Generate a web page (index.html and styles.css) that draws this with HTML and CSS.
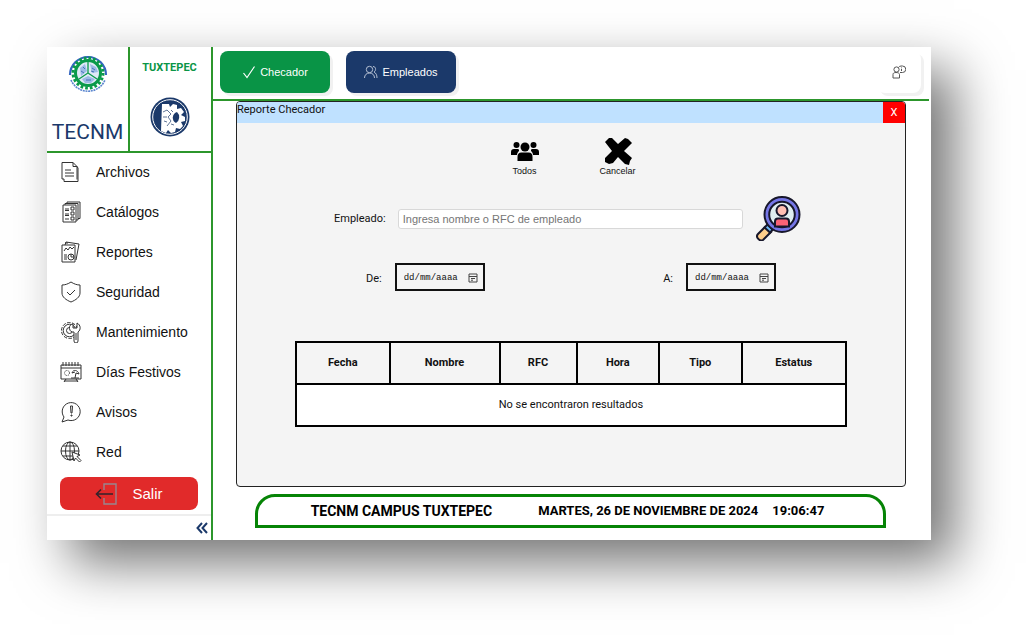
FILE: index.html
```html
<!DOCTYPE html>
<html lang="es">
<head>
<meta charset="utf-8">
<title>Reporte Checador</title>
<link rel="stylesheet" href="styles.css">
</head>
<body>
<div class="app">
  <aside class="sidebar">
    <header class="brand">
      <div class="brand-main">
        <svg class="seal" viewBox="0 0 40 40" fill="none">
          <path d="M2 22A18 18 0 1 1 38 22" stroke="#3465c0" stroke-width="2.2"/>
          <path d="M3 27A18.500 18.500 0 0 0 37 27" stroke="#5b86cf" stroke-width="1.600" stroke-dasharray="2 .7"/>
          <circle cx="20" cy="20" r="15" stroke="#0a9a4a" stroke-width="3" stroke-dasharray="2.700 2.012"/>
          <circle cx="20" cy="20" r="12.500" fill="#dfe9f7" stroke="#0a9a4a" stroke-width="3"/>
          <path d="M12 15l5-4 2 7-6 5zM22 11l6 3 2 5-6 1zM14 26l6-3 7 3-4 4h-6z" fill="#9dbbe6"/>
          <path d="M20 8v12L11 26M20 20l9 6" stroke="#0a9a4a" stroke-width="1.300"/>
          <path d="M13 18l3 2M24 15l3 2M18 27h5M15 14l2 2M23 18l3 1" stroke="#4673b8"/>
        </svg>
        <span class="brand-name">TECNM</span>
      </div>
      <div class="brand-campus">
        <span class="campus-name">TUXTEPEC</span>
        <svg class="campus-logo" viewBox="0 0 40 40">
          <circle cx="20" cy="20" r="19.500" fill="#1b396a"/>
          <circle cx="20" cy="20" r="17.300" fill="none" stroke="#fff" stroke-width="1"/>
          <path d="M12 7h7l1 3 3-3 4 1v4l4-1 3 4-3 3 4 2v4l-4 1 2 4-3 3-4-1-1 4-4 1-3-3-2 3-5-2z" fill="#fff"/>
          <path d="M27 15a6 6 0 0 0-1 11 7 7 0 0 0 1-11z" fill="#1b396a"/>
          <path d="M13 15l4-2 4 4-3 3 3 4-4 5M13 20h4M14 24l3 1M21 13l2 2M21 27l3 1" fill="none" stroke="#1b396a" stroke-width=".7"/>
        </svg>
      </div>
    </header>
    <nav class="menu">
      <a href="#archivos"><svg viewBox="0 0 22 22"><path d="M4 18H2V1.500h11L17 5.500v13"/><path d="M13 1.500v4h4M4 18v2.500h14V7l-1-1.500M5 9h6M5 12h9M5 15h9"/></svg>Archivos</a>
      <a href="#catalogos"><svg viewBox="0 0 22 22"><path d="M3 4h13v17H3zM5 4V2.500h13V19h-2M7 2.500V1h13v16.500h-2"/><path d="M5 8h4M5 13h4M5 18h4M5 9.500h4M5 14.500h4M11 6h3v3h-3zM11 11h3v3h-3zM11 16h3v3h-3z"/></svg>Catálogos</a>
      <a href="#reportes"><svg viewBox="0 0 22 22"><path d="M2 4h13v17H2zM5 4l1-3 13 2-3 16M5 2h3"/><path d="M4 10l2-3 2 2 2-3 2 2 2-2M4 14h3M4 16h3M4 18h3"/><circle cx="11" cy="16" r="3"/><path d="M11 13v3h3"/></svg>Reportes</a>
      <a href="#seguridad"><svg viewBox="0 0 22 22"><path d="M11 1c3 2 6 3 9 3v8c0 4-4 7-9 9-5-2-9-5-9-9V4c3 0 6-1 9-3z"/><path d="M7 11l3 3 5-5"/></svg>Seguridad</a>
      <a href="#mantenimiento"><svg viewBox="0 0 22 22"><circle cx="9.500" cy="9.500" r="8" stroke-dasharray="3.500 1.500"/><circle cx="9.500" cy="9.500" r="6.300"/><circle cx="9.500" cy="9.500" r="3"/><path fill="#fff" d="M14 11a4 4 0 0 1-1-8v4h4V2c4 2 4 7 1 9v9a2 2 0 0 1-4 0z"/><path d="M16 12v7"/></svg>Mantenimiento</a>
      <a href="#festivos"><svg viewBox="0 0 22 22"><path d="M1 4h20v14H1zM1 7h20M3 1v4M6 1v4M9 1v4M12 1v4M15 1v4M18 1v4M4 21l2-3M18 21l-2-3M4 20h14"/><circle cx="7" cy="12" r="2.500" stroke-dasharray="1 .8"/><path d="M12 12c1-4 6-3 7 1l-3-1-1 5M12 12l3-1M11 17h8"/></svg>Días Festivos</a>
      <a href="#avisos"><svg viewBox="0 0 22 22"><path d="M4 16a9 9 0 1 1 4 3l-6 2z"/><path d="M10.500 5h2l-.5 7h-1zM11 14h1v1h-1z"/></svg>Avisos</a>
      <a href="#red"><svg viewBox="0 0 22 22"><circle cx="10" cy="10" r="9"/><ellipse cx="10" cy="10" rx="4.500" ry="9"/><path d="M10 1v18M1 10h18M3 5h14M3 15h14"/><path fill="#fff" d="M12 11l8 3-3 1.500 4 4-1.500 1.500-4-4-1.500 3z"/></svg>Red</a>
    </nav>
    <button class="logout" type="button">
      <svg viewBox="0 0 24 22"><path class="door" d="M9 7V1h12v20H9v-6"/><path class="arrow" d="M18 11H1.500M6 6.500 1.500 11 6 15.500"/></svg>Salir
    </button>
    <div class="collapse">
      <button type="button" aria-label="Contraer menú"><svg viewBox="0 0 12 12"><path d="M6 1 1.500 6 6 11M11 1 6.500 6l4.500 5"/></svg></button>
    </div>
  </aside>

  <main class="main">
    <div class="topbar">
      <button class="tab tab-green" type="button"><svg viewBox="0 0 14 14"><path d="M1.500 8l3.500 4.500L12.500 1.500" stroke-width="1.200"/></svg>Checador</button>
      <button class="tab tab-blue" type="button"><svg viewBox="0 0 14 14"><circle cx="5.500" cy="4.500" r="3.200"/><path d="M.5 13c0-3 2-5 5-5s5 2 5 5M9 1.500c3 0 3.500 4 1 5.500 2 1 3 3 3 6"/></svg>Empleados</button>
      <button class="profile" type="button" aria-label="Información de usuario"><svg viewBox="0 0 14 14"><circle cx="4.500" cy="4.500" r="2.600"/><path d="M1 13v-3.500c0-1.300 1-2 3-2s3.500.7 3.500 2V13z"/><path d="M6.500 2.500A3 3 0 0 1 9 1h1.500a3 3 0 0 1 0 6.500H8M9.500 2.500v.8M9.500 4v2"/></svg></button>
    </div>

    <section class="panel">
      <header class="panel-title"><span>Reporte Checador</span><button type="button" aria-label="Cerrar">X</button></header>
      <form class="report">
        <div class="actions">
          <button type="button"><svg class="ic-group" viewBox="0 0 28 22"><circle cx="5.500" cy="4" r="3"/><circle cx="22.500" cy="4" r="3"/><path d="M0 14v-3c0-2 1-3 3-3h4c1 0 1 1 1 2-1 1-2 2-2 4zM28 14v-3c0-2-1-3-3-3h-4c-1 0-1 1-1 2 1 1 2 2 2 4z"/><circle cx="14" cy="6" r="4.500"/><path d="M6.500 20v-4c0-3 1-4.500 4-4.500h7c3 0 4 1.500 4 4.500v4z"/></svg>Todos</button>
          <button type="button"><svg class="ic-cross" viewBox="0 0 28 28"><path d="M1 5l4-4 3 0 6 6 7-6 3 1 4 4-8 8 8 7-2 3-1 4-4-1-7-7-5 6-4 1-4-2 0-4 7-7z"/></svg>Cancelar</button>
        </div>
        <div class="search-row">
          <label for="empleado">Empleado:</label>
          <input id="empleado" class="employee" type="text" placeholder="Ingresa nombre o RFC de empleado">
          <button class="search" type="button" aria-label="Buscar empleado">
            <svg viewBox="0 0 45 45" stroke="#17172b" stroke-width="2">
              <path d="M2 38l7-7 6 5-8 8c-3 2-8-3-5-6z" fill="#ffcf8b"/>
              <path d="M8.500 31.500l3-3 5.500 5-3 3z" fill="#6bb8f5"/>
              <path d="M12 28l3-2 4 4-3 3z" fill="#f5a83c"/>
              <circle cx="26" cy="18.500" r="17.500" fill="#7576e6"/>
              <circle cx="26" cy="18.500" r="12.800" fill="#dfeef0"/>
              <path d="M19 30.500v-5c0-2 1-3 3-3h8c2 0 3 1 3 3v5z" fill="#fb6376"/>
              <circle cx="26" cy="14.500" r="5.500" fill="#ffbfb3"/>
            </svg>
          </button>
        </div>
        <div class="dates">
          <div class="date-field"><label for="de">De:</label>
            <span class="date-box"><input id="de" type="text" placeholder="dd/mm/aaaa"><button type="button" aria-label="Elegir fecha inicial"><svg viewBox="0 0 10 10"><path d="M1 1h8v8H1zM1 3.500h8M3 5.500h4M3 7.200h2"/></svg></button></span></div>
          <div class="date-field"><label for="a">A:</label>
            <span class="date-box"><input id="a" type="text" placeholder="dd/mm/aaaa"><button type="button" aria-label="Elegir fecha final"><svg viewBox="0 0 10 10"><path d="M1 1h8v8H1zM1 3.500h8M3 5.500h4M3 7.200h2"/></svg></button></span></div>
        </div>
        <table class="results">
          <colgroup><col class="c-fecha"><col class="c-nombre"><col class="c-rfc"><col class="c-hora"><col class="c-tipo"><col class="c-estatus"></colgroup>
          <thead><tr><th>Fecha</th><th>Nombre</th><th>RFC</th><th>Hora</th><th>Tipo</th><th>Estatus</th></tr></thead>
          <tbody><tr><td colspan="6">No se encontraron resultados</td></tr></tbody>
        </table>
      </form>
    </section>

    <footer class="status"><span class="campus">TECNM CAMPUS TUXTEPEC</span><span class="day">MARTES, 26 DE NOVIEMBRE DE 2024</span><time>19:06:47</time></footer>
  </main>
</div>
</body>
</html>
```
FILE: styles.css
```css
* { box-sizing: border-box; }
body {
  margin: 0;
  padding: 47px 95px 95px 47px;
  background: #fff;
  color: #111;
  font: 11px/16px Roboto, sans-serif;
}
button { margin: 0; padding: 0; border: 0; background: none; font: inherit; color: inherit; }
svg { display: block; flex: none; }
.app {
  display: flex;
  min-height: calc(100vh - 142px);
  background: #fff;
  box-shadow: 23px 23px 50px rgba(0, 0, 0, .55);
}

.sidebar { display: flex; flex-direction: column; flex: none; width: 166px; border-right: 2px solid #2c962c; }
.brand { display: flex; height: 106px; border-bottom: 2px solid #2c962c; color: #1b396a; }
.brand-main, .brand-campus { display: flex; flex-direction: column; align-items: center; justify-content: space-between; }
.brand-main { width: 83px; padding: 6px 0; border-right: 2px solid #2c962c; }
.brand-campus { flex: 1; padding: 13px 2px 14px 0; }
.brand-name { font-size: 21px; line-height: 26px; }
.campus-name { font-size: 11px; font-weight: 700; color: #0a9547; }
.seal, .campus-logo { width: 40px; height: 40px; }

.menu { display: flex; flex-direction: column; }
.menu a {
  display: flex; align-items: center; gap: 14px; height: 40px; padding: 0 0 2px 13px;
  font: 14px/20px "Liberation Sans", sans-serif; color: #111; text-decoration: none;
}
.menu svg { width: 22px; height: 22px; fill: none; stroke: #333; stroke-width: 1; }
.logout {
  display: flex; align-items: center; justify-content: center; gap: 13px;
  height: 33px; margin: 4px 13px 4px; border-radius: 8px;
  background: #e12a2a; color: #fff; font: 15px/20px "Liberation Sans", sans-serif;
}
.logout svg { width: 24px; height: 22px; fill: none; }
.door { stroke: #98868f; stroke-width: 1.4; }
.arrow { stroke: #33232b; stroke-width: 1.6; }
.collapse { display: flex; flex: 1; align-items: center; justify-content: flex-end; padding-right: 3px; border-top: 2px solid #eee; }
.collapse svg { width: 12px; height: 12px; fill: none; stroke: #1b396a; stroke-width: 2; }

.main { flex: 1; min-width: 0; padding-right: 2px; }
.topbar { display: flex; align-items: flex-start; gap: 16px; height: 54px; padding: 4px 8px 0 7px; border-bottom: 2px solid #2c962c; }
.tab {
  display: flex; align-items: center; justify-content: center; gap: 4px;
  width: 110px; height: 42px; border-radius: 8px; box-shadow: 3px 3px 0 #f1f1f1;
  color: #fff; font: 11px/16px "Liberation Sans", sans-serif;
}
.tab svg { width: 14px; height: 14px; fill: none; stroke: #fff; }
.tab-blue svg { stroke: #b5c0d3; }
.tab-green { background: #099446; }
.tab-blue { background: #1b396a; }
.profile { display: flex; align-items: center; justify-content: center; width: 44px; height: 42px; margin-left: auto; border-radius: 8px; background: #fff; box-shadow: 3px 3px 0 #f1f1f1; }
.profile svg { width: 14px; height: 14px; fill: none; stroke: #555; }

.panel { margin: 0 23px; border: 1px solid #222; border-radius: 4px; background: #f4f4f4; overflow: hidden; }
.panel-title { display: flex; justify-content: space-between; height: 21px; background: #bfe1ff; line-height: 15px; }
.panel-title button { width: 22px; background: #f00; color: #fff; }
.report { display: flex; flex-direction: column; align-items: center; padding: 14px 24px 59px; }
.actions { display: flex; }
.actions button { display: flex; flex-direction: column; align-items: center; justify-content: flex-end; width: 93px; height: 40px; font: 9px/12px "Liberation Sans", sans-serif; }
.ic-group { width: 28px; height: 22px; margin-bottom: 2px; }
.ic-cross { width: 28px; height: 28px; }
.search-row { display: flex; align-items: center; width: 100%; max-width: 474px; margin: 19px 0 22px; padding-right: 7px; }
.employee { flex: 1; min-width: 0; height: 20px; margin: 0 13px 0 12px; padding: 0 4px; border: 1px solid #d8d8d8; border-radius: 3px; background: #fff; font: 11px/16px "Liberation Sans", sans-serif; }
.employee::placeholder { color: #757575; }
.search svg { width: 45px; height: 45px; }
.dates { display: flex; justify-content: space-between; width: 100%; max-width: 410px; }
.date-field { display: flex; align-items: center; gap: 13px; }
.date-field label { padding-top: 4px; }
.date-box { display: flex; align-items: center; justify-content: space-between; width: 90px; height: 28px; padding: 2px 5px 0 7px; border: 2px solid #111; }
.date-box input { width: 62px; padding: 0; border: 0; background: none; font: 9px/14px "Liberation Mono", monospace; color: #111; }
.date-box input::placeholder { color: #111; }
.date-box svg { width: 10px; height: 10px; fill: none; stroke: #444; }
.results { width: 100%; max-width: 552px; margin-top: 50px; border: 2px solid #000; border-collapse: collapse; table-layout: fixed; }
.results th, .results td { height: 42px; padding: 0; border: 2px solid #000; text-align: center; }
.results td { background: #fff; }
.c-fecha { width: 17%; }
.c-nombre { width: 20%; }
.c-rfc { width: 14%; }
.c-hora, .c-tipo { width: 15%; }
.c-estatus { width: 19%; }

.status {
  display: flex; align-items: center; justify-content: center;
  height: 34px; margin: 7px 43px 0 42px; padding-right: 6px; border: 3px solid #068406; border-radius: 20px 20px 0 0;
  font-size: 13px; font-weight: 700; color: #000; white-space: nowrap;
}
.campus { font-size: 14px; }
.day { margin: 0 14px 0 46px; }
```
